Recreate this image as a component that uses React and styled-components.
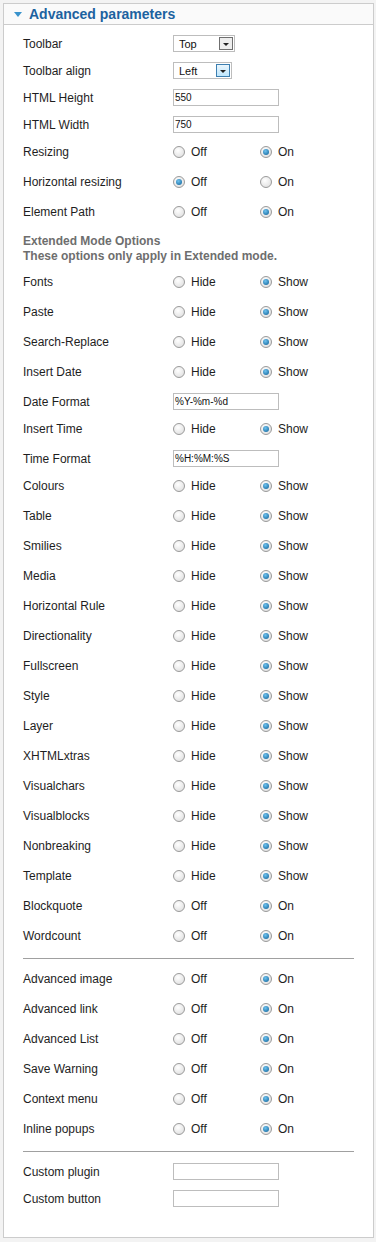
import React from 'react';
import styled, { createGlobalStyle } from 'styled-components';

const GlobalStyle = createGlobalStyle`
    body {
        margin : 0;
        background : #f3f3f3;
        font-family : "Liberation Sans", Arial, sans-serif;
    }
`

const Panel = styled.div`
    margin : 3px 2px 4px 3px;
    border : 1px solid #cccccc;
    background : #ffffff;
`

const Header = styled.div`
    height : 20px;
    display : flex;
    align-items : center;
    background : #fafafa;
    border-bottom : 1px solid #cccccc;
    padding-left : 10px;
`

const Arrow = styled.span`
    width : 0;
    height : 0;
    border-left : 4px solid transparent;
    border-right : 4px solid transparent;
    border-top : 5px solid #3a93cc;
    margin-right : 7px;
    margin-top : 1px;
`

const Title = styled.span`
    font-size : 14px;
    font-weight : bold;
    color : #1c62a0;
`

const Body = styled.div`
    padding : 5px 19px 25px 19px;
`

const Row = styled.div`
    display : flex;
    align-items : center;
    height : ${props => props.radio ? '30px' : '27px'};
    padding-bottom : ${props => props.radio ? '3px' : '0'};
    box-sizing : border-box;
`

const Label = styled.div`
    width : 150px;
    font-size : 12px;
    color : #1e1e1e;
`

const Note = styled.div`
    padding : 6px 0 4px;
    font-size : 12px;
    line-height : 15px;
    font-weight : bold;
    color : #6e6e6e;
`

const TextInput = styled.div`
    width : 103px;
    height : 15px;
    border : 1px solid #bdbdbd;
    font-size : 10px;
    line-height : 15px;
    padding-left : 1px;
    color : #111;
`

const Select = styled.div`
    width : ${props => props.width}px;
    height : 15px;
    border : 1px solid #bdbdbd;
    display : flex;
    align-items : center;
    justify-content : space-between;
    font-size : 11px;
    color : #111;
    padding-left : 5px;
`

const DropButton = styled.div`
    width : 14px;
    height : 13px;
    margin-right : 1px;
    box-sizing : border-box;
    display : flex;
    align-items : center;
    justify-content : center;
    border : 1px solid ${props => props.active ? '#3c7fb1' : '#6f6f6f'};
    background : ${props => props.active ? 'linear-gradient(#eaf6fd, #bee6fd)' : '#ededed'};

    &::after {
        content : '';
        border-left : 3px solid transparent;
        border-right : 3px solid transparent;
        border-top : 3px solid #222;
        margin-top : 2px;
    }
`

const Option = styled.label`
    width : 87px;
    display : flex;
    align-items : center;
    font-size : 12px;
    color : #1e1e1e;
`

const Radio = styled.span`
    width : 12px;
    height : 12px;
    border-radius : 50%;
    box-sizing : border-box;
    border : 1px solid #9a9a9a;
    background : radial-gradient(circle at 40% 35%, #ffffff, #dadada);
    margin-right : 6px;
    position : relative;

    ${props => props.checked && `
        &::after {
            content : '';
            position : absolute;
            left : 2px;
            top : 2px;
            width : 6px;
            height : 6px;
            border-radius : 50%;
            background : radial-gradient(circle at 40% 35%, #6fc3f0, #0b5e95);
        }
    `}
`

const Divider = styled.div`
    height : 13px;
    display : flex;
    align-items : center;
    padding-bottom : 1px;
    box-sizing : border-box;

    &::after {
        content : '';
        width : 331px;
        border-top : 1px solid #a0a0a0;
    }
`

const RadioRow = ({ label, off = 'Off', on = 'On', value = 1 }) => (
    <Row radio>
        <Label>{label}</Label>
        <Option><Radio checked={value === 0} />{off}</Option>
        <Option><Radio checked={value === 1} />{on}</Option>
    </Row>
)

const InputRow = ({ label, value }) => (
    <Row>
        <Label>{label}</Label>
        <TextInput>{value}</TextInput>
    </Row>
)

const SelectRow = ({ label, value, width, active }) => (
    <Row>
        <Label>{label}</Label>
        <Select width={width}>
            {value}
            <DropButton active={active} />
        </Select>
    </Row>
)

const showHide = ['Fonts', 'Paste', 'Search-Replace', 'Insert Date']
const showHide2 = ['Colours', 'Table', 'Smilies', 'Media', 'Horizontal Rule', 'Directionality',
    'Fullscreen', 'Style', 'Layer', 'XHTMLxtras', 'Visualchars', 'Visualblocks', 'Nonbreaking', 'Template']
const plugins = ['Advanced image', 'Advanced link', 'Advanced List', 'Save Warning', 'Context menu', 'Inline popups']

const App = () => {
    return (
        <>
            <GlobalStyle />
            <Panel>
                <Header>
                    <Arrow />
                    <Title>Advanced parameters</Title>
                </Header>
                <Body>
                    <SelectRow label="Toolbar" value="Top" width={55} />
                    <SelectRow label="Toolbar align" value="Left" width={52} active />
                    <InputRow label="HTML Height" value="550" />
                    <InputRow label="HTML Width" value="750" />
                    <RadioRow label="Resizing" />
                    <RadioRow label="Horizontal resizing" value={0} />
                    <RadioRow label="Element Path" />
                    <Note>
                        Extended Mode Options<br/>
                        These options only apply in Extended mode.
                    </Note>
                    {showHide.map(name => <RadioRow key={name} label={name} off="Hide" on="Show" />)}
                    <InputRow label="Date Format" value="%Y-%m-%d" />
                    <RadioRow label="Insert Time" off="Hide" on="Show" />
                    <InputRow label="Time Format" value="%H:%M:%S" />
                    {showHide2.map(name => <RadioRow key={name} label={name} off="Hide" on="Show" />)}
                    <RadioRow label="Blockquote" />
                    <RadioRow label="Wordcount" />
                    <Divider />
                    {plugins.map(name => <RadioRow key={name} label={name} />)}
                    <Divider />
                    <InputRow label="Custom plugin" />
                    <InputRow label="Custom button" />
                </Body>
            </Panel>
        </>
    );
};

export default App;
